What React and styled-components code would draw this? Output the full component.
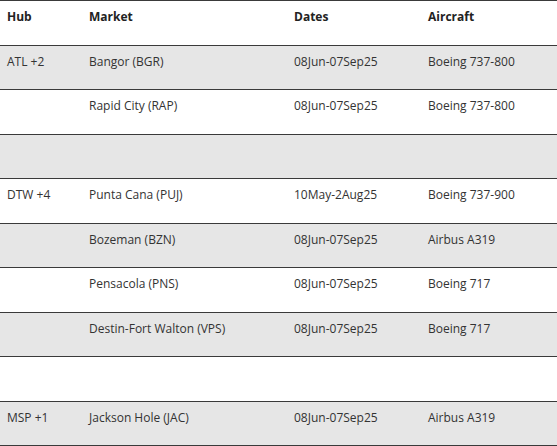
import React from "react";
import styled, { createGlobalStyle } from "styled-components";

const Global = createGlobalStyle`
  html, body { margin: 0; padding: 0; background: #fff; }
  body { font-family: "Open Sans", "Liberation Sans", sans-serif; }
`;

const Table = styled.table`
  width: 557px;
  border-collapse: collapse;
  table-layout: fixed;
  color: #333;
  font-size: 12px;
  border-top: 1px solid #3a3a3a;
`;

const Row = styled.tr`
  background: ${(p) => (p.$shaded ? "#e6e6e6" : "#fff")};
  border-bottom: 1px solid #3a3a3a;
`;

const HeadCell = styled.th`
  text-align: left;
  vertical-align: top;
  font-weight: 700;
  color: #222;
  padding: 8px 7px 0;
  height: 36px;
  line-height: 16px;
`;

const Cell = styled.td`
  vertical-align: top;
  padding: 8px 7px 0;
  height: 35.45px;
  line-height: 16px;
  white-space: nowrap;
`;

const widths = [82, 205, 134, 136];

const rows = [
  ["ATL +2", "Bangor (BGR)", "08Jun-07Sep25", "Boeing 737-800"],
  ["", "Rapid City (RAP)", "08Jun-07Sep25", "Boeing 737-800"],
  ["", "", "", ""],
  ["DTW +4", "Punta Cana (PUJ)", "10May-2Aug25", "Boeing 737-900"],
  ["", "Bozeman (BZN)", "08Jun-07Sep25", "Airbus A319"],
  ["", "Pensacola (PNS)", "08Jun-07Sep25", "Boeing 717"],
  ["", "Destin-Fort Walton (VPS)", "08Jun-07Sep25", "Boeing 717"],
  ["", "", "", ""],
  ["MSP +1", "Jackson Hole (JAC)", "08Jun-07Sep25", "Airbus A319"],
];

export default function App() {
  return (
    <>
      <Global />
      <Table>
        <colgroup>
          {widths.map((w, i) => (
            <col key={i} style={{ width: w }} />
          ))}
        </colgroup>
        <thead>
          <Row>
            <HeadCell>Hub</HeadCell>
            <HeadCell>Market</HeadCell>
            <HeadCell>Dates</HeadCell>
            <HeadCell>Aircraft</HeadCell>
          </Row>
        </thead>
        <tbody>
          {rows.map((r, i) => (
            <Row key={i} $shaded={i % 2 === 0}>
              {r.map((c, j) => (
                <Cell key={j}>{c}</Cell>
              ))}
            </Row>
          ))}
        </tbody>
      </Table>
    </>
  );
}
